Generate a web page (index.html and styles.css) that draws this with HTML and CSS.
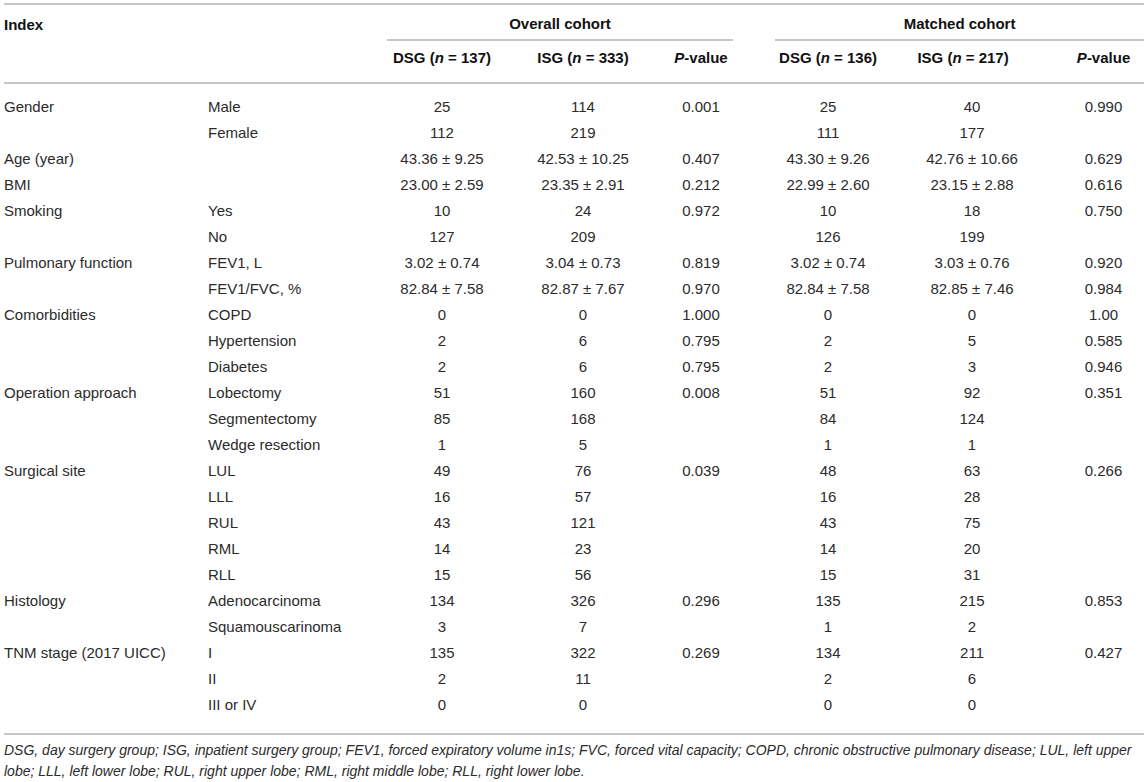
FILE: index.html
```html
<!DOCTYPE html>
<html lang="en">
<head>
<meta charset="utf-8">
<title>Table</title>
<link rel="stylesheet" href="styles.css">
</head>
<body>
<div class="wrap">
<table class="tbl">
  <colgroup>
    <col class="c1"><col class="c2"><col class="c3"><col class="c4"><col class="c5"><col class="cg"><col class="c6"><col class="c7"><col class="c8">
  </colgroup>
  <thead>
    <tr class="h1">
      <th class="left">Index</th>
      <th></th>
      <th colspan="3" class="span">Overall cohort</th>
      <th></th>
      <th colspan="3" class="span">Matched cohort</th>
    </tr>
    <tr class="h2">
      <th></th>
      <th></th>
      <th>DSG (<i>n</i> = 137)</th>
      <th>ISG (<i>n</i> = 333)</th>
      <th><i>P</i>-value</th>
      <th></th>
      <th>DSG (<i>n</i> = 136)</th>
      <th class="shift">ISG (<i>n</i> = 217)</th>
      <th><i>P</i>-value</th>
    </tr>
  </thead>
  <tbody>
    <tr class="first"><td>Gender</td><td>Male</td><td>25</td><td>114</td><td>0.001</td><td></td><td>25</td><td>40</td><td>0.990</td></tr>
    <tr><td></td><td>Female</td><td>112</td><td>219</td><td></td><td></td><td>111</td><td>177</td><td></td></tr>
    <tr><td>Age (year)</td><td></td><td>43.36 ± 9.25</td><td>42.53 ± 10.25</td><td>0.407</td><td></td><td>43.30 ± 9.26</td><td>42.76 ± 10.66</td><td>0.629</td></tr>
    <tr><td>BMI</td><td></td><td>23.00 ± 2.59</td><td>23.35 ± 2.91</td><td>0.212</td><td></td><td>22.99 ± 2.60</td><td>23.15 ± 2.88</td><td>0.616</td></tr>
    <tr><td>Smoking</td><td>Yes</td><td>10</td><td>24</td><td>0.972</td><td></td><td>10</td><td>18</td><td>0.750</td></tr>
    <tr><td></td><td>No</td><td>127</td><td>209</td><td></td><td></td><td>126</td><td>199</td><td></td></tr>
    <tr><td>Pulmonary function</td><td>FEV1, L</td><td>3.02 ± 0.74</td><td>3.04 ± 0.73</td><td>0.819</td><td></td><td>3.02 ± 0.74</td><td>3.03 ± 0.76</td><td>0.920</td></tr>
    <tr><td></td><td>FEV1/FVC, %</td><td>82.84 ± 7.58</td><td>82.87 ± 7.67</td><td>0.970</td><td></td><td>82.84 ± 7.58</td><td>82.85 ± 7.46</td><td>0.984</td></tr>
    <tr><td>Comorbidities</td><td>COPD</td><td>0</td><td>0</td><td>1.000</td><td></td><td>0</td><td>0</td><td>1.00</td></tr>
    <tr><td></td><td>Hypertension</td><td>2</td><td>6</td><td>0.795</td><td></td><td>2</td><td>5</td><td>0.585</td></tr>
    <tr><td></td><td>Diabetes</td><td>2</td><td>6</td><td>0.795</td><td></td><td>2</td><td>3</td><td>0.946</td></tr>
    <tr><td>Operation approach</td><td>Lobectomy</td><td>51</td><td>160</td><td>0.008</td><td></td><td>51</td><td>92</td><td>0.351</td></tr>
    <tr><td></td><td>Segmentectomy</td><td>85</td><td>168</td><td></td><td></td><td>84</td><td>124</td><td></td></tr>
    <tr><td></td><td>Wedge resection</td><td>1</td><td>5</td><td></td><td></td><td>1</td><td>1</td><td></td></tr>
    <tr><td>Surgical site</td><td>LUL</td><td>49</td><td>76</td><td>0.039</td><td></td><td>48</td><td>63</td><td>0.266</td></tr>
    <tr><td></td><td>LLL</td><td>16</td><td>57</td><td></td><td></td><td>16</td><td>28</td><td></td></tr>
    <tr><td></td><td>RUL</td><td>43</td><td>121</td><td></td><td></td><td>43</td><td>75</td><td></td></tr>
    <tr><td></td><td>RML</td><td>14</td><td>23</td><td></td><td></td><td>14</td><td>20</td><td></td></tr>
    <tr><td></td><td>RLL</td><td>15</td><td>56</td><td></td><td></td><td>15</td><td>31</td><td></td></tr>
    <tr><td>Histology</td><td>Adenocarcinoma</td><td>134</td><td>326</td><td>0.296</td><td></td><td>135</td><td>215</td><td>0.853</td></tr>
    <tr><td></td><td>Squamouscarinoma</td><td>3</td><td>7</td><td></td><td></td><td>1</td><td>2</td><td></td></tr>
    <tr><td>TNM stage (2017 UICC)</td><td>I</td><td>135</td><td>322</td><td>0.269</td><td></td><td>134</td><td>211</td><td>0.427</td></tr>
    <tr><td></td><td>II</td><td>2</td><td>11</td><td></td><td></td><td>2</td><td>6</td><td></td></tr>
    <tr class="last"><td></td><td>III or IV</td><td>0</td><td>0</td><td></td><td></td><td>0</td><td>0</td><td></td></tr>
  </tbody>
</table>
<p class="note">DSG, day surgery group; ISG, inpatient surgery group; FEV1, forced expiratory volume in1s; FVC, forced vital capacity; COPD, chronic obstructive pulmonary disease; LUL, left upper lobe; LLL, left lower lobe; RUL, right upper lobe; RML, right middle lobe; RLL, right lower lobe.</p>
</div>
</body>
</html>
```

FILE: styles.css
```css
html, body {
  margin: 0;
  padding: 0;
  background: #ffffff;
}

.wrap {
  padding: 3px 2px 0 4px;
  font-family: "Liberation Sans", Arial, sans-serif;
  color: #2b2b2b;
}

.tbl {
  width: 1140px;
  border-collapse: collapse;
  table-layout: fixed;
  border-top: 2px solid #c6c6c6;
  border-bottom: 2px solid #c6c6c6;
  font-size: 15px;
}

.c1 { width: 204px; }
.c2 { width: 179px; }
.c3 { width: 110px; }
.c4 { width: 172px; }
.c5 { width: 64px; }
.cg { width: 42px; }
.c6 { width: 106px; }
.c7 { width: 182px; }
.c8 { width: 81px; }

.tbl th {
  font-weight: bold;
  color: #111111;
  text-align: center;
  padding: 0;
  line-height: 20px;
  white-space: nowrap;
}

.tbl th.left {
  text-align: left;
}

.h1 th {
  height: 36px;
  padding-top: 4px;
  vertical-align: middle;
  box-sizing: border-box;
}

.h1 th.span {
  border-bottom: 2px solid #c6c6c6;
}

.h2 th {
  padding: 7px 0 14px;
}

.h2 {
  border-bottom: 2px solid #c6c6c6;
}

.tbl th.shift {
  padding-right: 18px;
}

.tbl td {
  padding: 3px 0;
  line-height: 20px;
  text-align: center;
  white-space: nowrap;
}

.tbl td:first-child,
.tbl td:nth-child(2) {
  text-align: left;
}

.tbl tr.first td {
  padding-top: 13px;
}

.tbl tr.last td {
  padding-bottom: 18px;
}

.note {
  margin: 5px 0 0;
  font-size: 14px;
  font-style: italic;
  line-height: 21px;
  color: #2b2b2b;
  width: 1140px;
}
```
